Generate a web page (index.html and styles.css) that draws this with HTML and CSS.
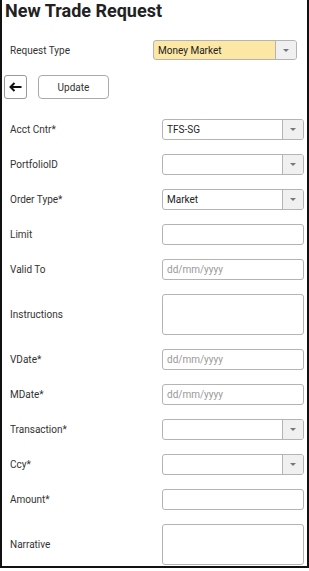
FILE: index.html
```html
<!DOCTYPE html>
<html lang="en">
<head>
    <meta charset="UTF-8">
    <meta name="viewport" content="width=device-width, initial-scale=1.0">
    <title>New Trade Request</title>
    <link rel="stylesheet" href="styles.css">
</head>
<body>
    <div class="page">
        <h1 class="title">New Trade Request</h1>

        <div class="type-row">
            <label class="field-label">Request Type</label>
            <div class="select select-type">
                <span class="select-value">Money Market</span>
                <span class="select-arrow"><i class="caret"></i></span>
            </div>
        </div>

        <div class="actions">
            <button class="back-btn" type="button" aria-label="Back">
                <svg width="13" height="10" viewBox="0 0 13 10">
                    <path d="M12.5 5H2M5.5 1L1.5 5l4 4" fill="none" stroke="#111" stroke-width="2"/>
                </svg>
            </button>
            <button class="update-btn" type="button">Update</button>
        </div>

        <div class="form">
            <div class="form-row">
                <label class="field-label">Acct Cntr*</label>
                <div class="select">
                    <span class="select-value">TFS-SG</span>
                    <span class="select-arrow"><i class="caret"></i></span>
                </div>
            </div>
            <div class="form-row">
                <label class="field-label">PortfolioID</label>
                <div class="select">
                    <span class="select-value"></span>
                    <span class="select-arrow"><i class="caret"></i></span>
                </div>
            </div>
            <div class="form-row">
                <label class="field-label">Order Type*</label>
                <div class="select">
                    <span class="select-value">Market</span>
                    <span class="select-arrow"><i class="caret"></i></span>
                </div>
            </div>
            <div class="form-row">
                <label class="field-label">Limit</label>
                <input class="text-input" type="text">
            </div>
            <div class="form-row">
                <label class="field-label">Valid To</label>
                <input class="text-input" type="text" placeholder="dd/mm/yyyy">
            </div>
            <div class="form-row">
                <label class="field-label">Instructions</label>
                <textarea class="text-area"></textarea>
            </div>
            <div class="form-row">
                <label class="field-label">VDate*</label>
                <input class="text-input" type="text" placeholder="dd/mm/yyyy">
            </div>
            <div class="form-row">
                <label class="field-label">MDate*</label>
                <input class="text-input" type="text" placeholder="dd/mm/yyyy">
            </div>
            <div class="form-row">
                <label class="field-label">Transaction*</label>
                <div class="select">
                    <span class="select-value"></span>
                    <span class="select-arrow"><i class="caret"></i></span>
                </div>
            </div>
            <div class="form-row">
                <label class="field-label">Ccy*</label>
                <div class="select">
                    <span class="select-value"></span>
                    <span class="select-arrow"><i class="caret"></i></span>
                </div>
            </div>
            <div class="form-row">
                <label class="field-label">Amount*</label>
                <input class="text-input" type="text">
            </div>
            <div class="form-row">
                <label class="field-label">Narrative</label>
                <textarea class="text-area"></textarea>
            </div>
        </div>
    </div>
</body>
</html>
```

FILE: styles.css
```css
:root {
    --text-color: #333;
    --border-color: #b4b4b4;
    --arrow-bg: #f0f0f0;
    --highlight-bg: #fce8a4;
}

body {
    margin: 0;
    font-family: Roboto, "Liberation Sans", Arial, sans-serif;
    color: var(--text-color);
    background-color: #fff;
}

.page {
    box-sizing: border-box;
    width: 309px;
    height: 568px;
    border: 2px solid #111;
    border-top: none;
    padding: 0 3px 0 0;
}

.title {
    margin: 0;
    padding: 0 0 0 3px;
    font-size: 18px;
    line-height: 21px;
    font-weight: 700;
    color: #222;
}

.field-label {
    padding-left: 8px;
    font-size: 10px;
    color: var(--text-color);
}

.type-row {
    display: flex;
    align-items: center;
    justify-content: space-between;
    margin-top: 19px;
    padding-right: 7px;
}

.actions {
    display: flex;
    gap: 11px;
    margin-top: 15px;
    padding-left: 2px;
}

.back-btn,
.update-btn {
    height: 24px;
    padding: 0;
    background-color: #fff;
    border: 1px solid #999;
    border-radius: 3px;
    font-family: inherit;
    cursor: pointer;
}

.back-btn {
    display: flex;
    align-items: center;
    justify-content: center;
    width: 23px;
}

.update-btn {
    width: 71px;
    font-size: 10px;
    color: var(--text-color);
    border-color: #aaa;
    border-radius: 4px;
}

.form {
    margin-top: 20px;
}

.form-row {
    display: flex;
    align-items: center;
    justify-content: space-between;
    margin-bottom: 14px;
}

.select {
    box-sizing: border-box;
    display: flex;
    width: 142px;
    height: 21px;
    border: 1px solid var(--border-color);
    border-radius: 3px;
    background-color: #fff;
    overflow: hidden;
}

.select-type {
    width: 144px;
    height: 20px;
    background-color: var(--highlight-bg);
}

.select-value {
    flex-grow: 1;
    padding-left: 4px;
    font-size: 10px;
    line-height: 19px;
    color: #222;
}

.select-arrow {
    display: flex;
    align-items: center;
    justify-content: center;
    width: 20px;
    background-color: var(--arrow-bg);
    border-left: 1px solid var(--border-color);
}

.caret {
    width: 0;
    height: 0;
    border-left: 3px solid transparent;
    border-right: 3px solid transparent;
    border-top: 3px solid #777;
}

.text-input,
.text-area {
    box-sizing: border-box;
    width: 142px;
    margin: 0;
    padding: 0 4px;
    border: 1px solid var(--border-color);
    border-radius: 3px;
    font-family: inherit;
    font-size: 10px;
    color: #222;
    outline: none;
}

.text-input {
    height: 21px;
}

.text-area {
    height: 41px;
    resize: none;
}

.text-input::placeholder {
    color: #999;
}
```
